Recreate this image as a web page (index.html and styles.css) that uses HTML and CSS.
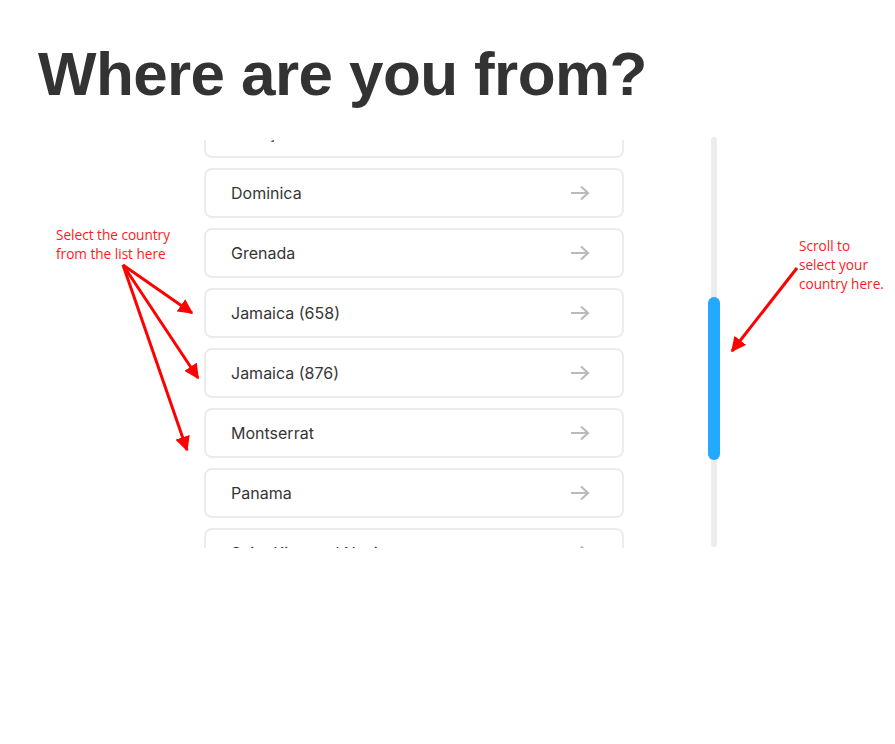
FILE: index.html
```html
<!DOCTYPE html>
<html lang="en">
<head>
<meta charset="utf-8">
<title>Where are you from?</title>
<link rel="stylesheet" href="styles.css">
</head>
<body>
<div class="page">
  <h1 class="title">Where are you from?</h1>
  <div class="picker">
    <div class="list" id="list">
      <div class="card"><span>Curaçao</span><svg class="arrow" viewBox="0 0 20 16"><path d="M1 8H18M11 1.5L18 8L11 14.5"/></svg></div>
      <div class="card"><span>Dominica</span><svg class="arrow" viewBox="0 0 20 16"><path d="M1 8H18M11 1.5L18 8L11 14.5"/></svg></div>
      <div class="card"><span>Grenada</span><svg class="arrow" viewBox="0 0 20 16"><path d="M1 8H18M11 1.5L18 8L11 14.5"/></svg></div>
      <div class="card"><span>Jamaica (658)</span><svg class="arrow" viewBox="0 0 20 16"><path d="M1 8H18M11 1.5L18 8L11 14.5"/></svg></div>
      <div class="card"><span>Jamaica (876)</span><svg class="arrow" viewBox="0 0 20 16"><path d="M1 8H18M11 1.5L18 8L11 14.5"/></svg></div>
      <div class="card"><span>Montserrat</span><svg class="arrow" viewBox="0 0 20 16"><path d="M1 8H18M11 1.5L18 8L11 14.5"/></svg></div>
      <div class="card"><span>Panama</span><svg class="arrow" viewBox="0 0 20 16"><path d="M1 8H18M11 1.5L18 8L11 14.5"/></svg></div>
      <div class="card"><span>Saint Kitts and Nevis</span><svg class="arrow" viewBox="0 0 20 16"><path d="M1 8H18M11 1.5L18 8L11 14.5"/></svg></div>
      <div class="card"><span>Saint Lucia</span><svg class="arrow" viewBox="0 0 20 16"><path d="M1 8H18M11 1.5L18 8L11 14.5"/></svg></div>
    </div>
    <div class="track"><div class="thumb"></div></div>
  </div>

  <div class="note note-left">Select the country<br>from the list here</div>
  <div class="note note-right">Scroll to<br>select your<br>country here.</div>
  <svg class="arrows" viewBox="0 0 895 744" width="895" height="744">
    <defs>
      <marker id="head" viewBox="0 0 10 10" refX="9" refY="5" markerWidth="5" markerHeight="5" orient="auto-start-reverse">
        <path d="M0 0L10 5L0 10z" fill="#ff0000"/>
      </marker>
    </defs>
    <g stroke="#ff0000" stroke-width="3" fill="none" marker-end="url(#head)">
      <line x1="123" y1="265" x2="192" y2="313"/>
      <line x1="123" y1="265" x2="198" y2="378"/>
      <line x1="123" y1="265" x2="187" y2="450"/>
      <line x1="797" y1="268" x2="732" y2="351"/>
    </g>
  </svg>
</div>
<script src="script.js"></script>
</body>
</html>
```

FILE: styles.css
```css
* { box-sizing: border-box; }
html, body { margin: 0; padding: 0; background: #fff; }
.page {
  position: relative;
  width: 895px;
  height: 744px;
  padding: 38px 0 0 38px;
}
.title {
  margin: 0;
  font-family: "Liberation Sans", Arial, sans-serif;
  font-weight: 700;
  font-size: 62px;
  line-height: 72px;
  color: #333333;
  letter-spacing: -0.6px;
}
.picker {
  display: flex;
  margin: 27px 0 0 166px;
  height: 411px;
}
.list {
  width: 420px;
  height: 408px;
  margin-top: 3px;
  overflow: hidden;
  display: flex;
  flex-direction: column;
  gap: 10px;
}
.card {
  flex: 0 0 50px;
  display: flex;
  align-items: center;
  justify-content: space-between;
  border: 2px solid #ececec;
  border-radius: 8px;
  padding: 0 32px 1px 25px;
  font-family: Inter, "Noto Sans", sans-serif;
  font-size: 16px;
  color: #363636;
}
.arrow {
  width: 20px;
  height: 16px;
  fill: none;
  stroke: #bbbbbb;
  stroke-width: 2.2;
}
.track {
  margin-left: 87px;
  width: 6px;
  height: 410px;
  background: #ececec;
  border-radius: 3px;
  position: relative;
}
.thumb {
  position: absolute;
  left: -3px;
  top: 160px;
  width: 12px;
  height: 163px;
  background: #23a9fd;
  border-radius: 6px;
}
.note {
  position: absolute;
  font-family: "Open Sans", "Noto Sans", sans-serif;
  font-size: 13.6px;
  line-height: 19px;
  color: #ff1a1a;
}
.note-left { left: 56px; top: 225px; }
.note-right { left: 799px; top: 236px; }
.arrows {
  position: absolute;
  left: 0;
  top: 0;
  pointer-events: none;
}
```

FILE: script.js
```js
document.getElementById('list').scrollTop = 32;
```
